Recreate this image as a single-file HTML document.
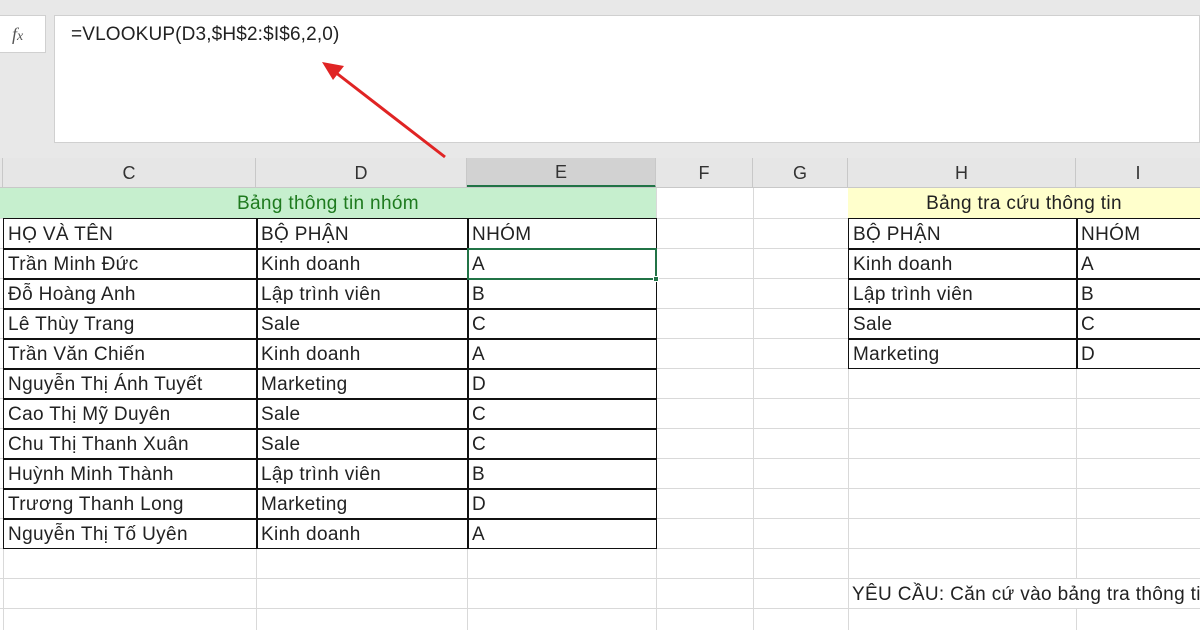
<!DOCTYPE html>
<html><head><meta charset="utf-8"><style>
*{margin:0;padding:0;box-sizing:border-box}
body{width:1200px;height:630px;overflow:hidden;background:#fff;position:relative;font-family:"Liberation Sans","DejaVu Sans",sans-serif;color:#222}
.a{position:absolute}
.t{position:absolute;font-size:19px;line-height:31px;white-space:nowrap;letter-spacing:0.35px}
.hl{position:absolute;left:0;width:1200px;height:1px;background:#d9d9d9}
.vl{position:absolute;top:188px;width:1px;height:442px;background:#d9d9d9}
.hd{position:absolute;top:158px;height:30px;font-size:18px;line-height:30px;text-align:center;color:#333;background:#e6e6e6;border-right:1px solid #c8c8c8}
</style></head><body>
<div class="a" style="left:0;top:0;width:1200px;height:158px;background:#e8e8e8"></div>
<div class="a" style="left:0;top:15px;width:46px;height:38px;background:#fff;border:1px solid #d0d0d0;border-left:none"></div>
<div class="a" style="left:12px;top:24px;font-family:'Liberation Serif',serif;font-style:italic;font-size:18px;color:#555">f<span style="font-size:14px">x</span></div>
<div class="a" style="left:54px;top:15px;width:1146px;height:128px;background:#fff;border:1px solid #d0d0d0"></div>
<div class="t" style="left:71px;top:20px;line-height:30px;letter-spacing:0.15px">=VLOOKUP(D3,$H$2:$I$6,2,0)</div>

<div class="hd" style="left:0;width:3px"></div>
<div class="hd" style="left:3px;width:253px">C</div>
<div class="hd" style="left:256px;width:211px">D</div>
<div class="hd" style="left:467px;width:189px;background:#d2d2d2;border-bottom:3px solid #217346;line-height:28px">E</div>
<div class="hd" style="left:656px;width:97px">F</div>
<div class="hd" style="left:753px;width:95px">G</div>
<div class="hd" style="left:848px;width:228px">H</div>
<div class="hd" style="left:1076px;width:124px;border-right:none">I</div>
<div class="a" style="left:0;top:187px;width:1200px;height:1px;background:#c8c8c8"></div>

<div class="hl" style="top:218px"></div><div class="hl" style="top:248px"></div><div class="hl" style="top:278px"></div><div class="hl" style="top:308px"></div><div class="hl" style="top:338px"></div><div class="hl" style="top:368px"></div><div class="hl" style="top:398px"></div><div class="hl" style="top:428px"></div><div class="hl" style="top:458px"></div><div class="hl" style="top:488px"></div><div class="hl" style="top:518px"></div><div class="hl" style="top:548px"></div><div class="hl" style="top:578px"></div><div class="hl" style="top:608px"></div>
<div class="vl" style="left:3px"></div><div class="vl" style="left:256px"></div><div class="vl" style="left:467px"></div><div class="vl" style="left:656px"></div><div class="vl" style="left:753px"></div><div class="vl" style="left:848px"></div><div class="vl" style="left:1076px"></div>

<div class="a" style="left:0;top:188px;width:656px;height:30px;background:#c6efce"></div>
<div class="a" style="left:0;top:188px;width:656px;text-align:center;font-size:19px;letter-spacing:0.35px;line-height:31px;color:#1e7a1e">Bảng thông tin nhóm</div>
<div class="a" style="left:848px;top:188px;width:352px;height:30px;background:#ffffcc"></div>
<div class="a" style="left:848px;top:188px;width:352px;text-align:center;font-size:19px;letter-spacing:0.35px;line-height:31px;color:#222">Bảng tra cứu thông tin</div>

<div class="a" style="left:3px;top:218px;width:654px;height:331px;border:1.5px solid #111;background:transparent"></div>
<div class="a" style="left:256px;top:218px;width:1.5px;height:331px;background:#111"></div>
<div class="a" style="left:467px;top:218px;width:1.5px;height:331px;background:#111"></div>
<div class="a" style="left:3px;top:248px;width:654px;height:1.5px;background:#111"></div><div class="a" style="left:3px;top:278px;width:654px;height:1.5px;background:#111"></div><div class="a" style="left:3px;top:308px;width:654px;height:1.5px;background:#111"></div><div class="a" style="left:3px;top:338px;width:654px;height:1.5px;background:#111"></div><div class="a" style="left:3px;top:368px;width:654px;height:1.5px;background:#111"></div><div class="a" style="left:3px;top:398px;width:654px;height:1.5px;background:#111"></div><div class="a" style="left:3px;top:428px;width:654px;height:1.5px;background:#111"></div><div class="a" style="left:3px;top:458px;width:654px;height:1.5px;background:#111"></div><div class="a" style="left:3px;top:488px;width:654px;height:1.5px;background:#111"></div><div class="a" style="left:3px;top:518px;width:654px;height:1.5px;background:#111"></div>
<div class="a" style="left:848px;top:218px;width:360px;height:151px;border:1.5px solid #111"></div>
<div class="a" style="left:1076px;top:218px;width:1.5px;height:151px;background:#111"></div>
<div class="a" style="left:848px;top:248px;width:360px;height:1.5px;background:#111"></div><div class="a" style="left:848px;top:278px;width:360px;height:1.5px;background:#111"></div><div class="a" style="left:848px;top:308px;width:360px;height:1.5px;background:#111"></div><div class="a" style="left:848px;top:338px;width:360px;height:1.5px;background:#111"></div>
<div class="a" style="left:467px;top:248px;width:190px;height:32px;border:2px solid #217346"></div>
<div class="a" style="left:653px;top:276px;width:6px;height:6px;background:#217346;border:1px solid #fff"></div>

<div class="t" style="left:8px;top:219px">HỌ VÀ TÊN</div><div class="t" style="left:261px;top:219px">BỘ PHẬN</div><div class="t" style="left:472px;top:219px">NHÓM</div>
<div class="t" style="left:8px;top:249px">Trần Minh Đức</div><div class="t" style="left:261px;top:249px">Kinh doanh</div><div class="t" style="left:472px;top:249px">A</div>
<div class="t" style="left:8px;top:279px">Đỗ Hoàng Anh</div><div class="t" style="left:261px;top:279px">Lập trình viên</div><div class="t" style="left:472px;top:279px">B</div>
<div class="t" style="left:8px;top:309px">Lê Thùy Trang</div><div class="t" style="left:261px;top:309px">Sale</div><div class="t" style="left:472px;top:309px">C</div>
<div class="t" style="left:8px;top:339px">Trần Văn Chiến</div><div class="t" style="left:261px;top:339px">Kinh doanh</div><div class="t" style="left:472px;top:339px">A</div>
<div class="t" style="left:8px;top:369px">Nguyễn Thị Ánh Tuyết</div><div class="t" style="left:261px;top:369px">Marketing</div><div class="t" style="left:472px;top:369px">D</div>
<div class="t" style="left:8px;top:399px">Cao Thị Mỹ Duyên</div><div class="t" style="left:261px;top:399px">Sale</div><div class="t" style="left:472px;top:399px">C</div>
<div class="t" style="left:8px;top:429px">Chu Thị Thanh Xuân</div><div class="t" style="left:261px;top:429px">Sale</div><div class="t" style="left:472px;top:429px">C</div>
<div class="t" style="left:8px;top:459px">Huỳnh Minh Thành</div><div class="t" style="left:261px;top:459px">Lập trình viên</div><div class="t" style="left:472px;top:459px">B</div>
<div class="t" style="left:8px;top:489px">Trương Thanh Long</div><div class="t" style="left:261px;top:489px">Marketing</div><div class="t" style="left:472px;top:489px">D</div>
<div class="t" style="left:8px;top:519px">Nguyễn Thị Tố Uyên</div><div class="t" style="left:261px;top:519px">Kinh doanh</div><div class="t" style="left:472px;top:519px">A</div>

<div class="t" style="left:853px;top:219px">BỘ PHẬN</div><div class="t" style="left:1081px;top:219px">NHÓM</div>
<div class="t" style="left:853px;top:249px">Kinh doanh</div><div class="t" style="left:1081px;top:249px">A</div>
<div class="t" style="left:853px;top:279px">Lập trình viên</div><div class="t" style="left:1081px;top:279px">B</div>
<div class="t" style="left:853px;top:309px">Sale</div><div class="t" style="left:1081px;top:309px">C</div>
<div class="t" style="left:853px;top:339px">Marketing</div><div class="t" style="left:1081px;top:339px">D</div>
<div class="a" style="left:849px;top:579px;width:351px;height:29px;background:#fff"></div>
<div class="t" style="left:852px;top:579px">YÊU CẦU: Căn cứ vào bảng tra thông tin</div>

<svg class="a" style="left:0;top:0" width="1200" height="630">
<line x1="445" y1="157" x2="335" y2="72" stroke="#e02424" stroke-width="3"/>
<polygon points="322,62 344,66 333,80" fill="#e02424"/>
</svg>
</body></html>
